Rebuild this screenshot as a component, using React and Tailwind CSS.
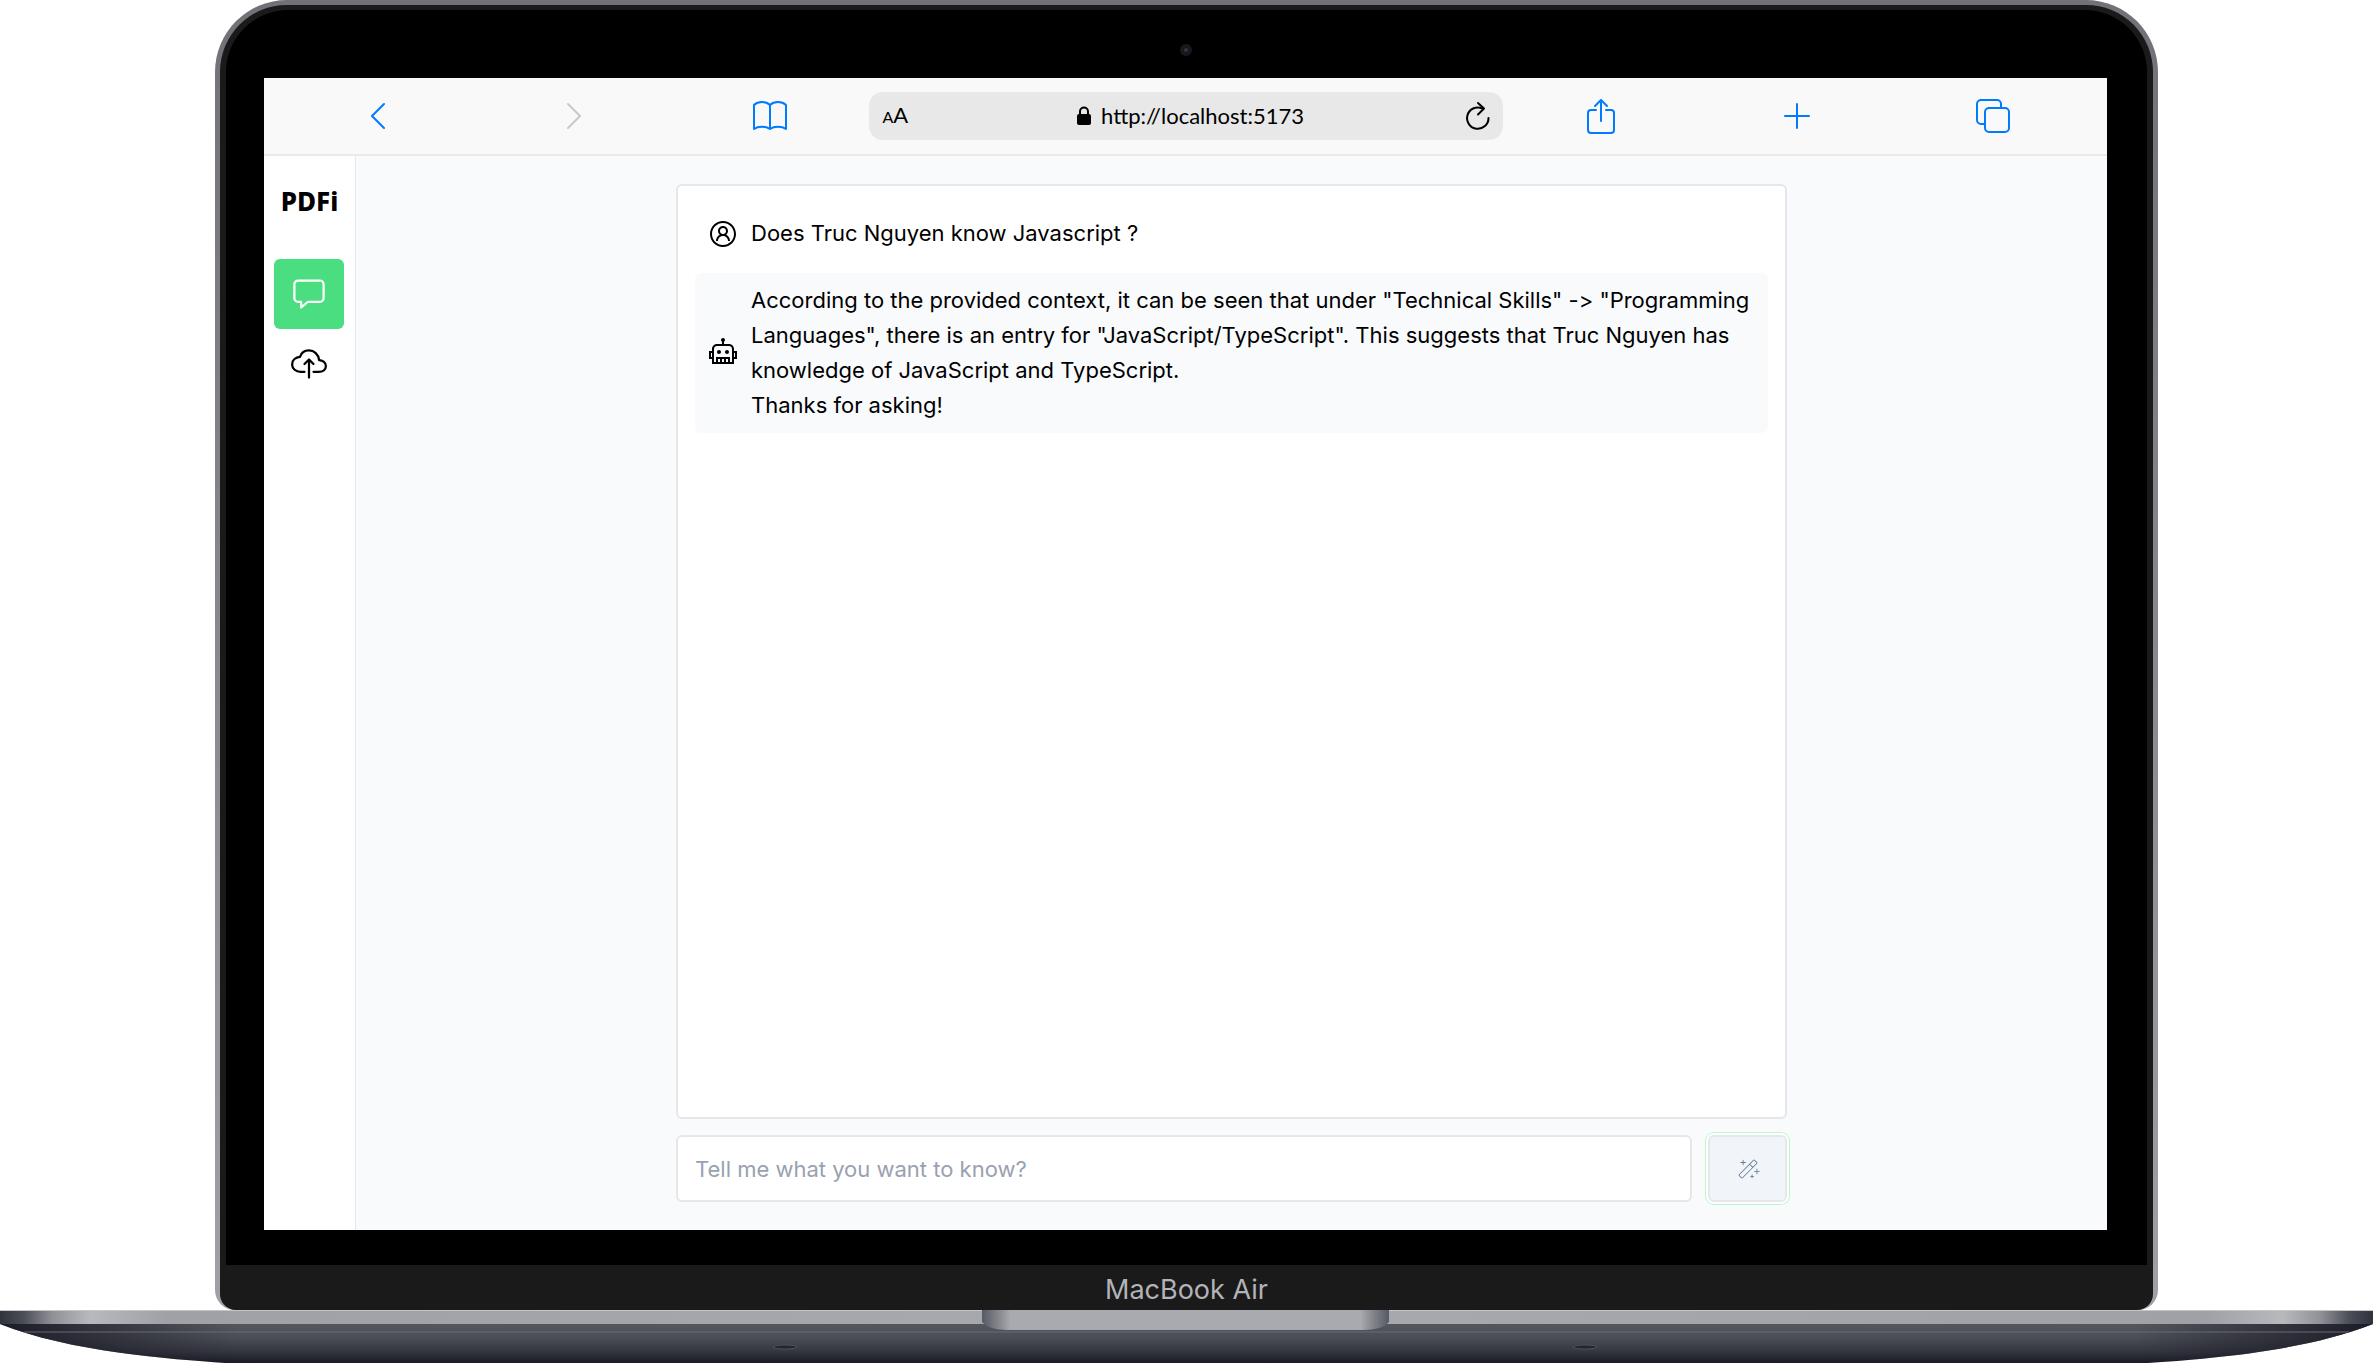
import { useState } from "react";
import { IoChatboxOutline, IoCloudUploadOutline } from "react-icons/io5";
import { LiaUserCircle, LiaRobotSolid } from "react-icons/lia";
import { PiMagicWandThin } from "react-icons/pi";

const line = { fill: "none", stroke: "currentColor", strokeWidth: 2, strokeLinecap: "round", strokeLinejoin: "round" };

function ToolButton({ label, width, height, children, className = "text-[#007aff]" }) {
  return (
    <button type="button" aria-label={label} className={`flex flex-1 items-center justify-center ${className}`}>
      <svg width={width} height={height} viewBox={`0 0 ${width} ${height}`} {...line}>
        {children}
      </svg>
    </button>
  );
}

function BrowserBar() {
  return (
    <header className="flex h-[78px] shrink-0 items-center border-b-2 border-[#e9eaec] bg-[#f9f9f9] px-4">
      <nav aria-label="Browser history" className="flex min-w-0 flex-1">
        <ToolButton label="Back" width={16} height={28}>
          <path d="M14 2 2 14l12 12" />
        </ToolButton>
        <ToolButton label="Forward" width={16} height={28} className="text-[#c8c8c8]">
          <path d="m2 2 12 12L2 26" />
        </ToolButton>
        <ToolButton label="Bookmarks" width={36} height={32}>
          <path d="M18 5C14 1 6 1 2 5v24c4-3 12-3 16 0 4-3 12-3 16 0V5c-4-4-12-4-16 0v24" />
        </ToolButton>
      </nav>
      <div className="flex h-12 w-[634px] shrink-0 items-center rounded-[14px] bg-[#e8e8e8] pr-3 pl-[14px] text-black">
        <button type="button" aria-label="Text size" className="flex w-9 items-baseline font-[Lato,sans-serif] leading-none">
          <span className="text-base">A</span>
          <span className="text-[22px]">A</span>
        </button>
        <div className="flex flex-1 items-center justify-center gap-[10px]">
          <svg width="14" height="20" viewBox="0 0 14 20">
            <path d="M3 9V5.500a4 4 0 0 1 8 0V9" fill="none" stroke="currentColor" strokeWidth="2" />
            <rect y="8" width="14" height="11" rx="2" fill="currentColor" />
          </svg>
          <span className="font-[Lato,sans-serif] text-[22px] leading-7">http://localhost:5173</span>
        </div>
        <button type="button" aria-label="Reload" className="flex w-7 justify-end">
          <svg width="26" height="30" viewBox="0 0 26 30" {...line}>
            <path d="M23.500 17A10.700 10.700 0 1 1 17 7.300" />
            <path d="m13 2 6 5.500-6 6" />
          </svg>
        </button>
      </div>
      <nav aria-label="Browser actions" className="flex min-w-0 flex-1">
        <ToolButton label="Share" width={30} height={36}>
          <path d="M10 12H5a3 3 0 0 0-3 3v17a3 3 0 0 0 3 3h20a3 3 0 0 0 3-3V15a3 3 0 0 0-3-3h-5M15 23V2M9 8l6-6 6 6" />
        </ToolButton>
        <ToolButton label="New tab" width={28} height={28}>
          <path d="M14 2v24M2 14h24" />
        </ToolButton>
        <ToolButton label="Show tabs" width={34} height={34}>
          <rect x="9" y="9" width="24" height="24" rx="4" />
          <path d="M9 25H5a4 4 0 0 1-4-4V5a4 4 0 0 1 4-4h16a4 4 0 0 1 4 4v4" />
        </ToolButton>
      </nav>
    </header>
  );
}

function Sidebar() {
  return (
    <aside className="flex w-[92px] shrink-0 flex-col items-center border-r border-gray-200 bg-white pt-[27px]">
      <h1 className="font-['Noto_Sans',sans-serif] text-[26px] leading-9 font-extrabold">PDFi</h1>
      <nav aria-label="Main" className="mt-10 flex flex-col">
        <a href="#chat" aria-label="Chat" className="flex size-[70px] items-center justify-center rounded-md bg-[#4ade80] text-white">
          <IoChatboxOutline size={36} />
        </a>
        <a href="#upload" aria-label="Upload" className="flex size-[70px] items-center justify-center">
          <IoCloudUploadOutline size={36} />
        </a>
      </nav>
    </aside>
  );
}

function Message({ icon: Icon, className = "", children }) {
  return (
    <article className={`flex items-center gap-3 rounded-md px-3 py-[10px] ${className}`}>
      <Icon size={32} className="shrink-0" />
      <div className="text-[22px] leading-[35px] [font-variant-ligatures:no-contextual]">{children}</div>
    </article>
  );
}

function Chat() {
  const [question, setQuestion] = useState("");
  return (
    <main className="flex min-w-0 flex-1 justify-center bg-[#f8fafc] py-7">
      <div className="flex w-full max-w-[1111px] flex-col gap-4">
        <section aria-label="Conversation" className="flex flex-1 flex-col gap-3 rounded-md border-2 border-gray-200 bg-white px-[17px] py-5">
          <Message icon={LiaUserCircle}>Does Truc Nguyen know Javascript ?</Message>
          <Message icon={LiaRobotSolid} className="bg-[#f8fafc]">
            <p>
              According to the provided context, it can be seen that under "Technical Skills" -&gt; "Programming Languages", there is
              an entry for "JavaScript/TypeScript". This suggests that Truc Nguyen has knowledge of JavaScript and TypeScript.
            </p>
            <p>Thanks for asking!</p>
          </Message>
        </section>
        <form className="flex gap-4" onSubmit={(e) => e.preventDefault()}>
          <input
            type="text"
            aria-label="Question"
            value={question}
            onChange={(e) => setQuestion(e.target.value)}
            placeholder="Tell me what you want to know?"
            className="h-[67px] min-w-0 flex-1 rounded-md border-2 border-gray-200 bg-white px-[17px] text-[22px] placeholder:text-gray-400"
          />
          <button
            type="submit"
            aria-label="Ask"
            className="flex w-[79px] items-center justify-center rounded-md border-2 border-gray-200 bg-slate-100 text-slate-500 ring-1 ring-green-200 ring-offset-2"
          >
            <PiMagicWandThin size={26} />
          </button>
        </form>
      </div>
    </main>
  );
}

function LaptopBase() {
  return (
    <svg className="block h-[53px] w-full" viewBox="0 0 2373 53" preserveAspectRatio="none" aria-hidden="true">
      <defs>
        <linearGradient id="edge">
          <stop offset="0" stopColor="#30323c" />
          <stop offset="0.010" stopColor="#4c4e57" />
          <stop offset="0.022" stopColor="#909197" />
          <stop offset="0.038" stopColor="#b8b9bd" />
          <stop offset="0.070" stopColor="#a0a1a6" />
          <stop offset="0.500" stopColor="#a9aaaf" />
          <stop offset="0.930" stopColor="#a0a1a6" />
          <stop offset="0.962" stopColor="#b8b9bd" />
          <stop offset="0.978" stopColor="#909197" />
          <stop offset="0.990" stopColor="#4c4e57" />
          <stop offset="1" stopColor="#30323c" />
        </linearGradient>
        <linearGradient id="belly" x2="0" y2="1">
          <stop offset="0" stopColor="#55575f" />
          <stop offset="0.350" stopColor="#4c4e56" />
          <stop offset="0.700" stopColor="#343640" />
          <stop offset="1" stopColor="#191a24" />
        </linearGradient>
        <linearGradient id="bellySides">
          <stop offset="0" stopColor="#1b1c27" />
          <stop offset="0.100" stopColor="#1b1c27" stopOpacity="0" />
          <stop offset="0.900" stopColor="#1b1c27" stopOpacity="0" />
          <stop offset="1" stopColor="#1b1c27" />
        </linearGradient>
        <linearGradient id="notch">
          <stop offset="0" stopColor="#565964" />
          <stop offset="0.040" stopColor="#85868d" />
          <stop offset="0.070" stopColor="#a9aaaf" />
          <stop offset="0.930" stopColor="#a9aaaf" />
          <stop offset="0.960" stopColor="#85868d" />
          <stop offset="1" stopColor="#565964" />
        </linearGradient>
      </defs>
      <path d="M0 14C70 42 170 49 225 53H2148C2203 49 2303 42 2373 14Z" fill="url(#belly)" />
      <path d="M0 14C70 42 170 49 225 53H2148C2203 49 2303 42 2373 14Z" fill="url(#bellySides)" />
      <path d="M24 22H2349" stroke="#696b73" />
      <rect width="2373" height="14" fill="url(#edge)" />
      <path d="M0 .5H2373" stroke="#c4c5c8" />
      <path d="M982 0H1389V12Q1382 20 1364 20H1007Q989 20 982 12Z" fill="url(#notch)" />
      <g fill="#24262f" stroke="#50525b">
        <ellipse cx="785" cy="37" rx="12" ry="2" />
        <ellipse cx="1585" cy="37" rx="12" ry="2" />
      </g>
    </svg>
  );
}

export default function App() {
  return (
    <div className="flex min-h-screen flex-col overflow-hidden bg-white font-[Inter,sans-serif] text-black">
      <div className="mx-[9.060%] flex flex-1 flex-col rounded-t-[72px] rounded-b-[20px] bg-linear-to-b from-[#717278] to-[#a0a1a6] px-[5px] pt-[5px]">
        <div className="flex flex-1 flex-col rounded-t-[67px] rounded-b-[16px] bg-[#1a1a1a] px-1.5 pt-[5px]">
          <div className="flex flex-1 flex-col rounded-t-[62px] bg-black pr-10 pl-[38px]">
            <div className="flex h-[68px] items-center justify-center pt-[34px] pb-[22px]">
              <span className="flex size-3 items-center justify-center rounded-full bg-[#17181b]">
                <span className="size-1 rounded-full bg-[#30343b]" />
              </span>
            </div>
            <div className="flex flex-1 flex-col">
              <BrowserBar />
              <div className="flex flex-1">
                <Sidebar />
                <Chat />
              </div>
            </div>
            <div className="h-[35px]" />
          </div>
          <footer className="flex h-[45px] items-center justify-center pt-1 text-[27px] leading-8 text-[#b3b3b8]">MacBook Air</footer>
        </div>
      </div>
      <LaptopBase />
    </div>
  );
}
